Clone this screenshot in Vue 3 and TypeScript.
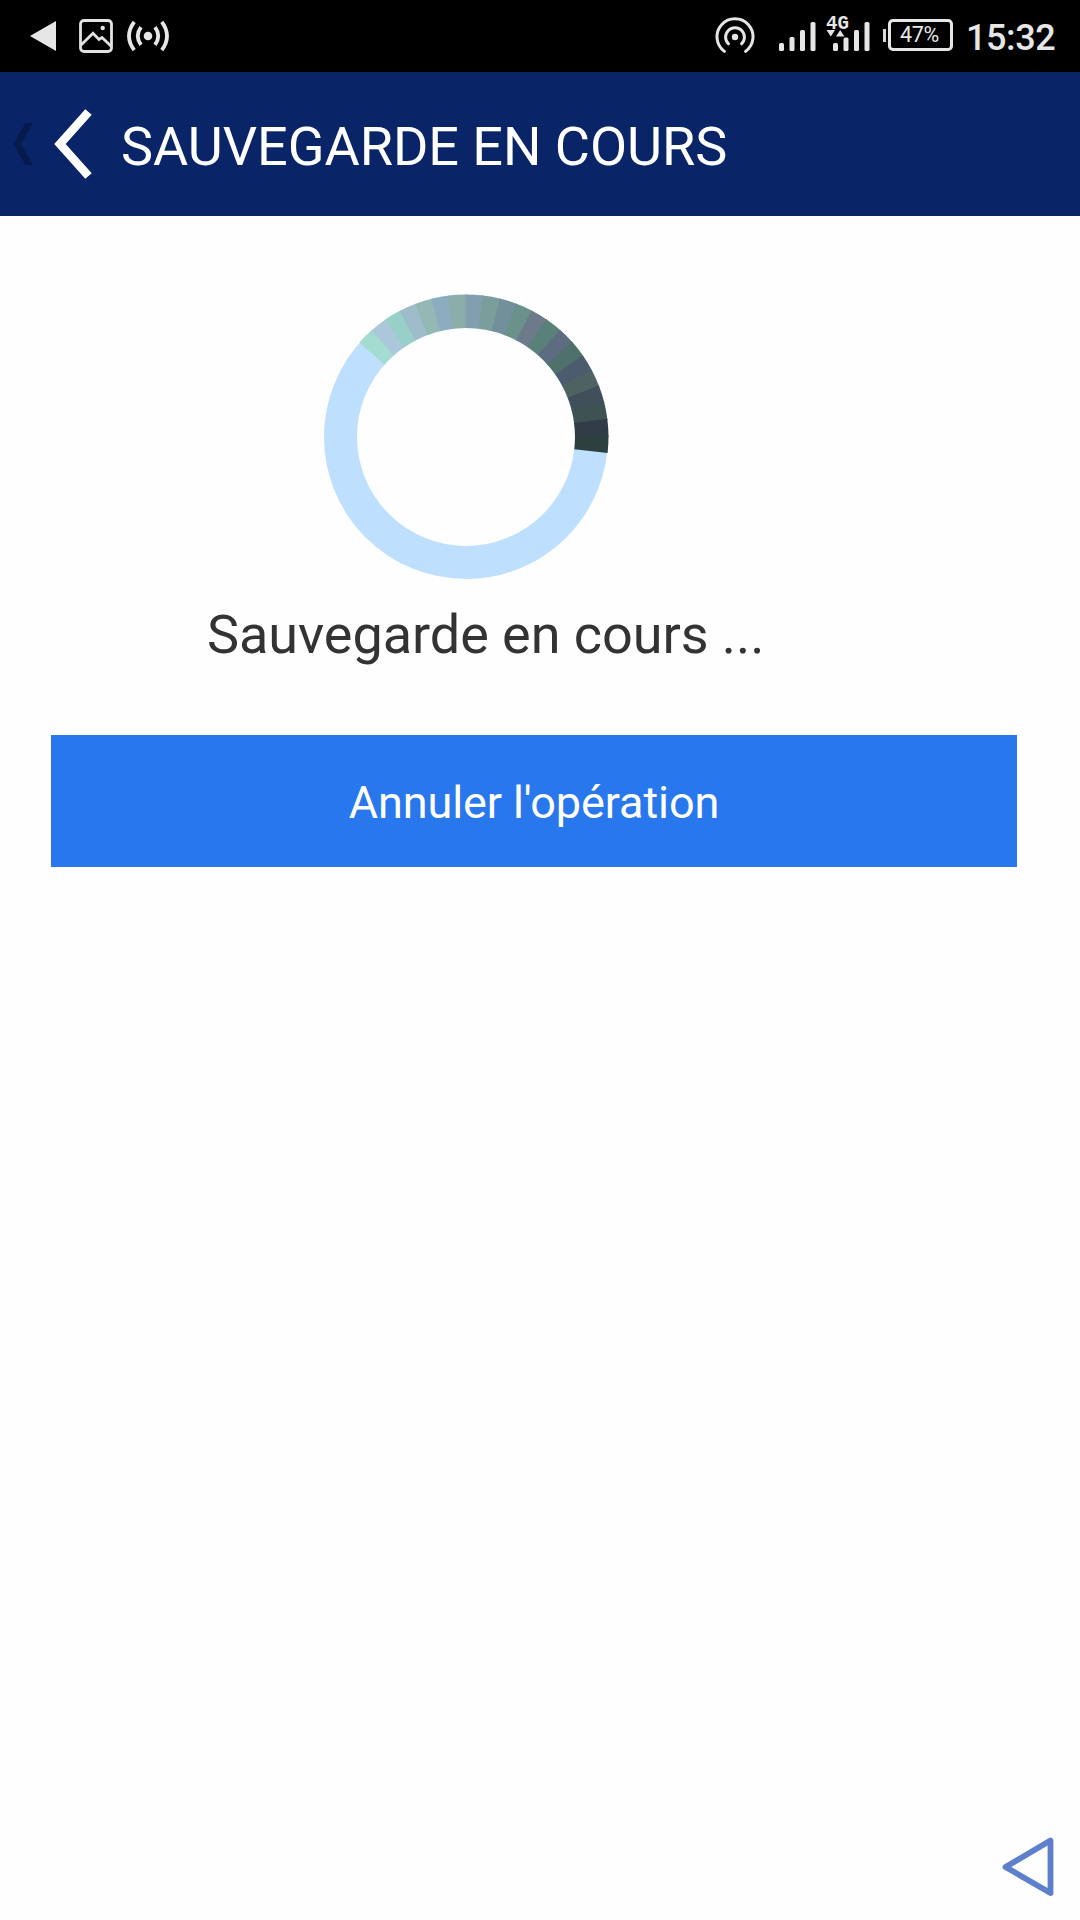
<script setup lang="ts">
interface Segment {
  d: string
  color: string
}

const battery = '47%'
const clock = '15:32'

const shades: string[] = [
  '#a5dcd2', '#abc8da', '#99cfc9', '#9fbccb', '#94b9b5', '#8badbf', '#8aaea9',
  '#829fb0', '#7b9e9c', '#71909c', '#6b918b', '#6c7a8a', '#5a807a', '#5e6c82',
  '#50706c', '#4c5c6e', '#4f6262', '#404f5a', '#3f5253', '#303d49', '#2d403f',
]

const START = -48.5
const STEP = 6.9
const OUTER = 142.5
const INNER = 109

function point(radius: number, degrees: number): string {
  const a = (degrees * Math.PI) / 180
  return `${(150 + radius * Math.sin(a)).toFixed(2)} ${(150 - radius * Math.cos(a)).toFixed(2)}`
}

const segments: Segment[] = shades.map((color, i) => {
  const from = START + i * STEP
  const to = from + STEP + (i < shades.length - 1 ? 0.5 : 0)
  return {
    color,
    d: `M${point(OUTER, from)} A${OUTER} ${OUTER} 0 0 1 ${point(OUTER, to)} L${point(INNER, to)} A${INNER} ${INNER} 0 0 0 ${point(INNER, from)}Z`,
  }
})
</script>

<template>
  <div class="screen">
    <div class="status">
      <div class="status-left">
        <svg width="26" height="30" viewBox="0 0 26 30"><path d="M0 15 26 0V30Z" fill="#e6e6e6" /></svg>
        <svg class="picture" width="34" height="34" viewBox="0 0 34 34" fill="none" stroke="#e2e2e2" stroke-width="2.8">
          <rect x="1.5" y="1.5" width="31" height="31" rx="3.5" />
          <path d="M2 26 14 14.2 20 20.5 23 18.5 32 27" />
          <circle cx="23.7" cy="9" r="2.2" fill="#e2e2e2" stroke="none" />
        </svg>
        <svg class="hotspot" width="42" height="32" viewBox="0 0 42 32" fill="none" stroke="#e6e6e6" stroke-width="3.8">
          <circle cx="21" cy="16" r="4.3" fill="#e6e6e6" stroke="none" />
          <path d="M14 7.2Q7.5 16 14 24.8M28 7.2Q34.5 16 28 24.8M7.2 1.8Q-3.2 16 7.2 30.2M34.8 1.8Q45.2 16 34.8 30.2" />
        </svg>
      </div>
      <div class="status-right">
        <svg width="40" height="36" viewBox="0 0 40 36" fill="none" stroke="#e6e6e6" stroke-width="3" stroke-linecap="round">
          <circle cx="20" cy="20" r="3.2" fill="#e6e6e6" stroke="none" />
          <path d="M13.4 26.8A9.4 9.4 0 1 1 26.6 26.8M9.4 34.4A18 18 0 1 1 30.6 34.4" />
        </svg>
        <svg class="signal" width="38" height="30" viewBox="0 0 38 30" fill="#e6e6e6">
          <rect x="0" y="21" width="5" height="8" rx="1.6" />
          <rect x="10.5" y="15" width="5" height="14" rx="1.6" />
          <rect x="21" y="8" width="5" height="21" rx="1.6" />
          <rect x="31.5" y="0" width="5" height="29" rx="1.6" />
        </svg>
        <svg class="lte" width="44" height="40" viewBox="0 0 44 40" fill="#e6e6e6">
          <text x="-1" y="14.5" class="lte-label" textLength="23" lengthAdjust="spacingAndGlyphs">4G</text>
          <path d="M-0.5 16H8L3.8 22.5ZM9 22.5 13.2 16 17.4 22.5Z" />
          <rect x="6" y="29" width="5" height="8" rx="1.6" />
          <rect x="16.5" y="23.5" width="5" height="13.5" rx="1.6" />
          <rect x="27" y="16" width="5" height="21" rx="1.6" />
          <rect x="37.5" y="8" width="5" height="29" rx="1.6" />
        </svg>
        <div class="battery">
          <span class="battery-tip"></span>
          <span class="battery-body">{{ battery }}</span>
        </div>
        <span class="clock">{{ clock }}</span>
      </div>
    </div>

    <header class="bar">
      <svg class="ghost" width="20" height="44" viewBox="0 0 20 44"><path d="M12.5 1H19.5L8 22 19.5 43H12.5L0.5 22Z" fill="#061a4e" /></svg>
      <svg class="back" width="40" height="74" viewBox="0 0 40 74"><path d="M34.5 5 6 37 34.5 69" fill="none" stroke="#fff" stroke-width="8.6" /></svg>
      <h1>SAUVEGARDE EN COURS</h1>
    </header>

    <main>
      <svg class="spinner" width="300" height="300" viewBox="0 0 300 300">
        <circle cx="150" cy="150" r="125.5" fill="none" stroke="#bfdfff" stroke-width="33" />
        <path v-for="(s, i) in segments" :key="i" :d="s.d" :fill="s.color" />
      </svg>
      <p>Sauvegarde en cours ...</p>
      <button type="button">Annuler l'opération</button>
    </main>

    <footer>
      <svg width="54" height="62" viewBox="0 0 54 62"><path d="M4.5 31 49.5 4.500V57Z" fill="none" stroke="#5e80cc" stroke-width="5.8" stroke-linejoin="round" /></svg>
    </footer>
  </div>
</template>

<style>
body {
  background: #fff;
}
</style>

<style scoped>
.screen {
  display: flex;
  flex-direction: column;
  width: 1080px;
  height: 1920px;
  overflow: hidden;
  background: #fefefe;
  font-family: Roboto, sans-serif;
}
svg {
  display: block;
  flex: none;
}
.status {
  display: flex;
  justify-content: space-between;
  height: 72px;
  background: #000;
  color: #e6e6e6;
}
.status-left {
  display: flex;
  align-items: center;
  padding-left: 30px;
}
.picture {
  margin-left: 23px;
}
.hotspot {
  margin-left: 14px;
}
.status-right {
  display: flex;
  align-items: flex-start;
  padding: 17px 24px 0 0;
}
.signal {
  margin: 5px 0 0 24px;
}
.lte {
  margin: -3px 0 0 10px;
  overflow: visible;
}
.lte-label {
  font: 700 21px "Liberation Mono", monospace;
}
.battery {
  display: flex;
  align-items: center;
  margin: 2px 0 0 12px;
}
.battery-tip {
  width: 3px;
  height: 13px;
  margin-right: 2px;
  background: #d8d8d8;
}
.battery-body {
  display: flex;
  align-items: center;
  justify-content: center;
  box-sizing: border-box;
  width: 65px;
  height: 32px;
  padding: 0 2px 1px 0;
  border: 3px solid #e6e6e6;
  border-radius: 5px;
  font-size: 21.5px;
  letter-spacing: -0.3px;
  line-height: 24px;
}
.clock {
  width: 90px;
  margin-left: 13px;
  font-size: 36px;
  font-weight: 500;
  letter-spacing: -0.4px;
  line-height: 42px;
  white-space: nowrap;
}
.bar {
  display: flex;
  align-items: center;
  height: 144px;
  background: #092568;
}
.ghost {
  margin-left: 13px;
}
.back {
  margin-left: 21px;
  filter: blur(0.6px);
}
h1 {
  margin: 6px 0 0 27px;
  color: #fff;
  font-size: 54px;
  font-weight: 400;
  letter-spacing: -0.04px;
  line-height: 64px;
  white-space: nowrap;
}
main {
  display: flex;
  flex: 1;
  flex-direction: column;
  align-items: flex-start;
}
.spinner {
  margin: 71px 0 0 316px;
  filter: blur(0.7px);
}
p {
  margin: 16px 0 0 207px;
  color: #333;
  font-size: 54px;
  letter-spacing: -0.05px;
  line-height: 64px;
  white-space: nowrap;
}
button {
  width: 966px;
  height: 132px;
  margin: 68px 0 0 51px;
  padding: 2px 0 0;
  border: 0;
  background: #2877ed;
  color: #fff;
  font: 400 45px Roboto, sans-serif;
  letter-spacing: -0.1px;
}
footer {
  display: flex;
  justify-content: flex-end;
  padding: 0 25px 22px 0;
}
</style>
